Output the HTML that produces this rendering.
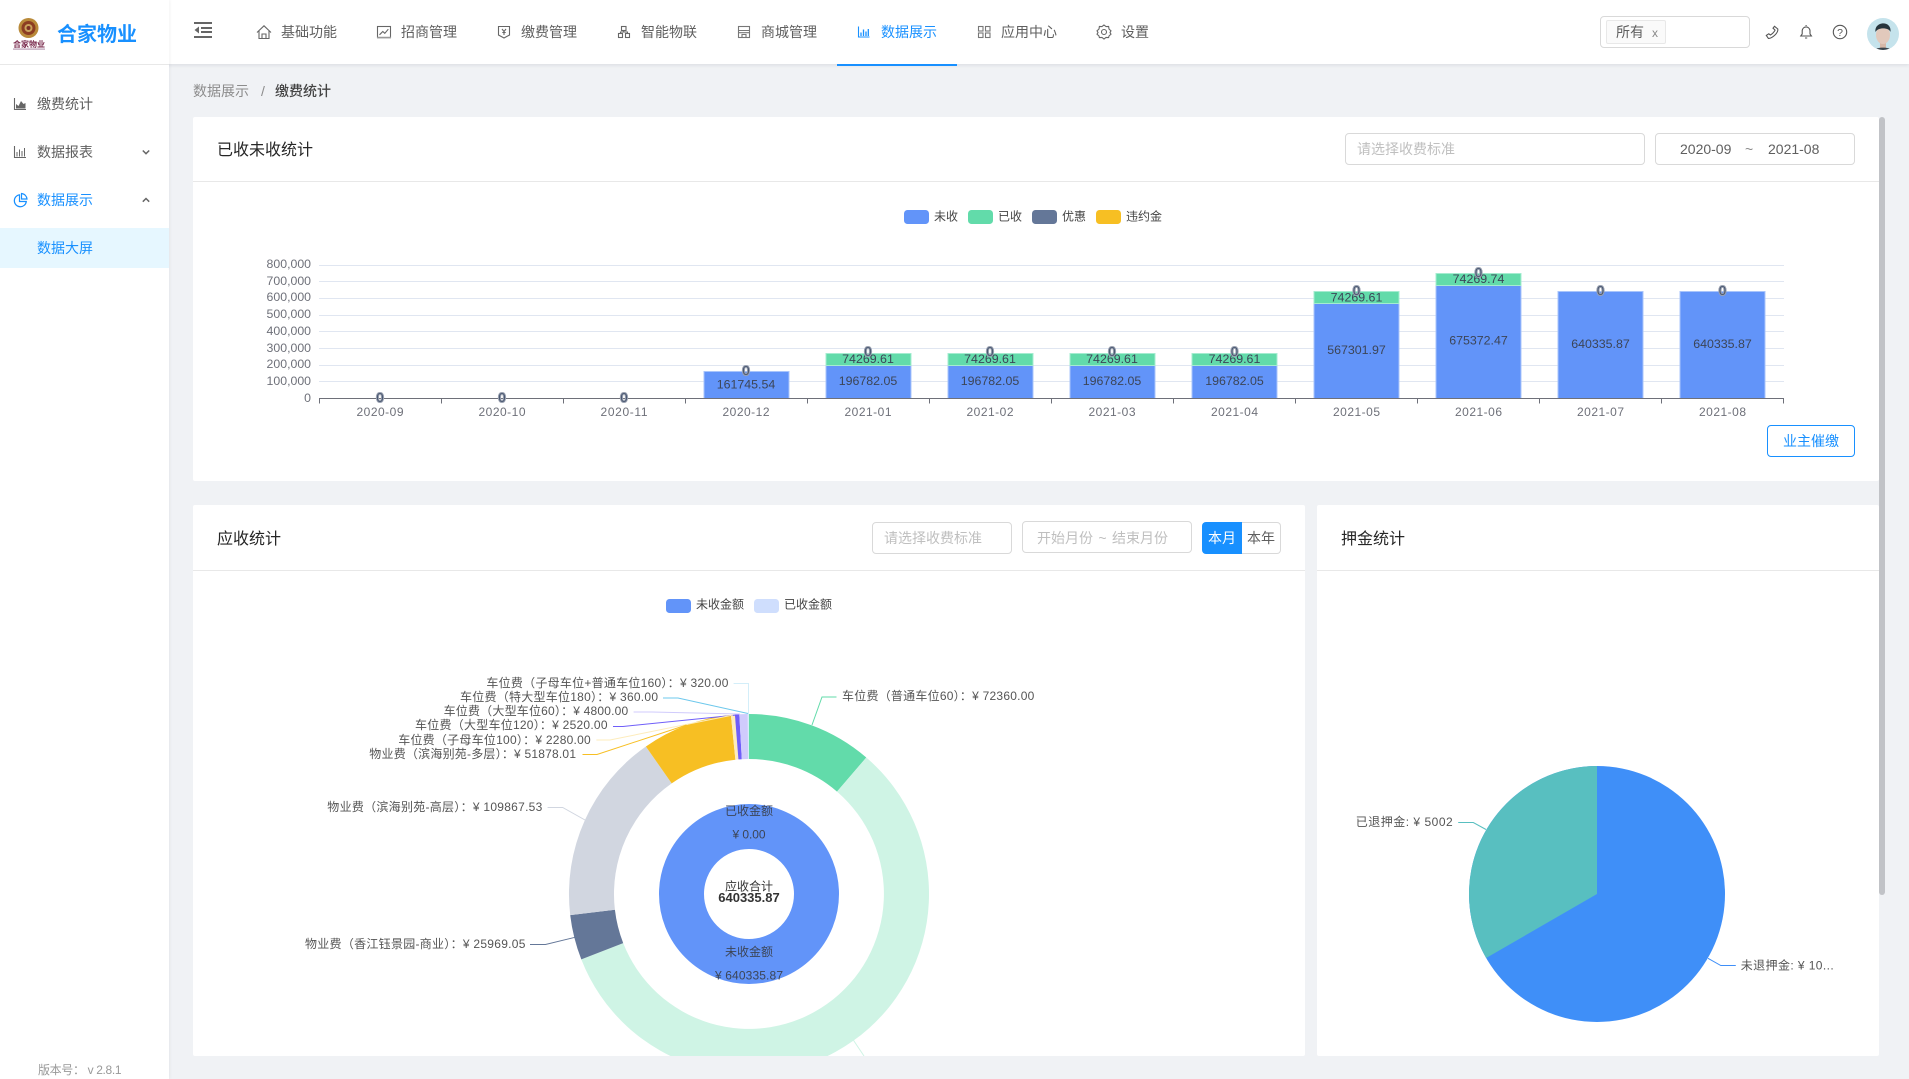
<!DOCTYPE html>
<html lang="zh-CN">
<head>
<meta charset="utf-8">
<title>数据展示 - 缴费统计</title>
<style>
*{box-sizing:border-box;margin:0;padding:0}
html,body{width:1909px;height:1079px;overflow:hidden;background:#f0f2f5}
body{position:relative;font-family:"Liberation Sans","Noto Sans CJK SC",sans-serif;font-size:14px;color:#5f5f5f}
.abs{position:absolute}
.t{position:absolute;white-space:nowrap;line-height:20px;height:20px}
.header{position:absolute;left:0;top:0;width:1909px;height:64px;background:#fff;box-shadow:0 1px 4px rgba(0,21,41,.1)}
.side{position:absolute;left:0;top:0;width:169px;height:1079px;background:#fff;box-shadow:1px 0 3px rgba(0,21,41,.05)}
.side-line{position:absolute;left:0;top:64px;width:169px;height:1px;background:#e8e8e8}
.panel{position:absolute;background:#fff;border-radius:2px}
.hline{position:absolute;height:1px;background:#e8e8e8}
.title{font-size:16px;color:#262626;line-height:24px;height:24px}
.box{position:absolute;border:1px solid #d9d9d9;border-radius:4px;background:#fff}
.ph{color:#bfbfbf}
svg{position:absolute;left:0;top:0}
svg text{font-family:"Liberation Sans","Noto Sans CJK SC",sans-serif}
.c{font-family:"Noto Sans CJK TC",sans-serif}
</style>
</head>
<body>

<div class="header"></div>
<div class="side"></div>
<div class="side-line"></div>

<!-- brand -->
<div class="t" style="left:57px;top:21px;height:28px;line-height:28px;font-size:20px;font-weight:bold;color:#1890ff">合家物业</div>

<!-- top nav -->
<div class="t" style="left:281px;top:22px">基础功能</div>
<div class="t" style="left:401px;top:22px">招商管理</div>
<div class="t" style="left:521px;top:22px">缴费管理</div>
<div class="t" style="left:641px;top:22px">智能物联</div>
<div class="t" style="left:761px;top:22px">商城管理</div>
<div class="t" style="left:881px;top:22px;color:#1890ff">数据展示</div>
<div class="t" style="left:1001px;top:22px">应用中心</div>
<div class="t" style="left:1121px;top:22px">设置</div>
<div class="abs" style="left:837px;top:64px;width:120px;height:2px;background:#1890ff"></div>

<!-- top right tag select -->
<div class="box" style="left:1600px;top:16px;width:150px;height:32px"></div>
<div class="abs" style="left:1606px;top:20px;width:60px;height:24px;background:#fafafa;border:1px solid #e8e8e8;border-radius:2px"></div>
<div class="t" style="left:1616px;top:22px">所有</div>
<div class="t" style="left:1652px;top:23px;color:#888;font-size:12px">x</div>

<!-- sidebar -->
<div class="t" style="left:37px;top:94px">缴费统计</div>
<div class="t" style="left:37px;top:142px">数据报表</div>
<div class="t" style="left:37px;top:190px;color:#1890ff">数据展示</div>
<div class="abs" style="left:0;top:228px;width:169px;height:40px;background:#e6f7ff"></div>
<div class="t" style="left:37px;top:238px;color:#1890ff">数据大屏</div>
<div class="t" style="left:38px;top:1060px;font-size:12px;color:#999;letter-spacing:-.35px">版本号： v 2.8.1</div>

<!-- breadcrumb -->
<div class="t" style="left:193px;top:81px;color:#8c8c8c">数据展示</div>
<div class="t" style="left:261px;top:81px;color:#8c8c8c">/</div>
<div class="t" style="left:275px;top:81px;color:#444;font-weight:500">缴费统计</div>

<!-- panel 1 -->
<div class="panel" style="left:193px;top:117px;width:1686px;height:364px"></div>
<div class="hline" style="left:193px;top:181px;width:1686px"></div>
<div class="t title" style="left:217px;top:139px">已收未收统计</div>
<div class="box" style="left:1345px;top:133px;width:300px;height:32px"></div>
<div class="t ph" style="left:1357px;top:139px">请选择收费标准</div>
<div class="box" style="left:1655px;top:133px;width:200px;height:32px"></div>
<div class="t" style="left:1680px;top:139px">2020-09</div>
<div class="t" style="left:1745px;top:139px;color:#8c8c8c">~</div>
<div class="t" style="left:1768px;top:139px">2021-08</div>
<div class="box" style="left:1767px;top:425px;width:88px;height:32px;border-color:#1890ff"></div>
<div class="t" style="left:1783px;top:431px;color:#1890ff">业主催缴</div>

<!-- panel 2 -->
<div class="panel" style="left:193px;top:505px;width:1112px;height:551px"></div>
<div class="hline" style="left:193px;top:570px;width:1112px"></div>
<div class="t title" style="left:217px;top:528px">应收统计</div>
<div class="box" style="left:872px;top:522px;width:140px;height:32px"></div>
<div class="t ph" style="left:884px;top:528px">请选择收费标准</div>
<div class="box" style="left:1022px;top:521px;width:170px;height:32px"></div>
<div class="t ph" style="left:1037px;top:528px;word-spacing:1.5px">开始月份 ~ 结束月份</div>
<div class="abs" style="left:1202px;top:522px;width:40px;height:32px;background:#1890ff;border-radius:4px 0 0 4px"></div>
<div class="abs" style="left:1242px;top:522px;width:39px;height:32px;border:1px solid #d9d9d9;border-left:0;border-radius:0 4px 4px 0"></div>
<div class="t" style="left:1208px;top:528px;color:#fff">本月</div>
<div class="t" style="left:1247px;top:528px">本年</div>

<!-- panel 3 -->
<div class="panel" style="left:1317px;top:505px;width:562px;height:551px"></div>
<div class="hline" style="left:1317px;top:570px;width:562px"></div>
<div class="t title" style="left:1341px;top:528px">押金统计</div>

<!-- scrollbar -->
<div class="abs" style="left:1879px;top:117px;width:6px;height:778px;background:#c1c3c7;border-radius:3px"></div>

<svg width="1909" height="1079" viewBox="0 0 1909 1079" xmlns="http://www.w3.org/2000/svg">
<defs>
<clipPath id="p2"><rect x="193" y="571" width="1112" height="485"/></clipPath>
<clipPath id="av"><circle cx="1883" cy="34" r="16"/></clipPath>
</defs>

<!-- logo -->
<g>
<circle cx="28.5" cy="28" r="10" fill="#b98a3a"/>
<circle cx="28.5" cy="28" r="7" fill="#8c3d22"/>
<circle cx="28.5" cy="28" r="4" fill="#c9a25b"/>
<circle cx="28.5" cy="28" r="2" fill="#7c2f24"/>
<text x="29" y="47" text-anchor="middle" font-size="8" font-weight="bold" fill="#7a2a4d" textLength="32" lengthAdjust="spacingAndGlyphs">合家物业</text>
<rect x="13" y="48.5" width="32" height="1.2" fill="#b79ab0"/>
</g>

<!-- fold icon -->
<g fill="#666">
<rect x="194" y="22" width="18" height="2"/><rect x="201" y="27" width="11" height="2"/><rect x="201" y="31" width="11" height="2"/><rect x="194" y="36" width="18" height="2"/>
<path d="M199 26.5V33.5L194.5 30Z"/>
</g>

<!-- nav icons -->
<g fill="none" stroke="#666" stroke-width="1.1">
<path d="M257 32.5L264 25.8L271 32.5M259 31V38.5H269V31M262 38.5V34H266V38.5"/>
<rect x="377.5" y="26.5" width="13" height="11"/><path d="M377 37.6H391" stroke-width="1.6" stroke="#999"/><path d="M379.5 34.8L382.8 31.5L384.8 33.3L388.3 29.2"/>
<path d="M498.5 26.5H509.5V35L504 38L498.5 35Z"/><path d="M502 29L504 31.5L506 29M504 31.5V35M502.3 32.5H505.7"/>
<rect x="621.5" y="26.5" width="4.5" height="4"/><rect x="618.5" y="33.5" width="4" height="4"/><rect x="625.5" y="33.5" width="4" height="4"/><path d="M623.7 30.5V32H620.5V33.5M623.7 32H627.5V33.5"/>
<rect x="738.5" y="26.5" width="11" height="11" stroke="#777"/><path d="M738.5 30.5H749.5M738.5 32.7H749.5M742 37.5V34.5H746V37.5" stroke="#777"/>
<path d="M858.5 26.5V37H869.5" stroke="#1890ff"/><path d="M861 36V32.5M863.5 36V29.5M866 36V31.5M868.3 36V29" stroke="#1890ff" stroke-width="1.3"/>
<g stroke="#777"><rect x="978.5" y="26.5" width="4.5" height="4.5"/><rect x="985.5" y="26.5" width="4.5" height="4.5"/><rect x="978.5" y="33" width="4.5" height="4.5"/><rect x="985.5" y="33" width="4.5" height="4.5"/></g>
<path d="M1104 25L1106 26.6L1108.6 26.4L1109 29L1111 30.8L1110 32.5L1111 34.2L1109 36L1108.6 37.6L1106 37.4L1104 39L1102 37.4L1099.4 37.6L1099 36L1097 34.2L1098 32.5L1097 30.8L1099 29L1099.4 26.4L1102 26.6Z"/><circle cx="1104" cy="32" r="2.5"/>
<!-- phone -->
<path d="M1774.5 26.3L1777.8 29C1778.5 33 1772 38.5 1768.4 38.4L1766.3 35.4L1768.8 33.8L1770.4 35C1772 34.3 1774.4 31.8 1775.1 30.1L1773 28.2Z" stroke="#555"/>
<!-- bell -->
<path d="M1800.8 36H1811.4L1810 34V30.5A4 4.6 0 0 0 1802.2 30.5V34ZM1805 38H1807.2M1806.1 26V25" stroke="#555"/>
<!-- help -->
<circle cx="1840" cy="32" r="6.7" stroke="#555"/>
</g>
<text x="1840" y="36" text-anchor="middle" font-size="10.5" fill="#555">?</text>

<!-- avatar -->
<g clip-path="url(#av)">
<rect x="1867" y="18" width="32" height="32" fill="#c5e3ec"/>
<rect x="1880" y="42" width="6" height="6" fill="#d6b8a8"/>
<ellipse cx="1883" cy="35" rx="7" ry="9" fill="#e2c9bc"/>
<path d="M1875.5 32C1874 21 1892 20 1890.5 32C1889 27.5 1878 27 1875.5 32Z" fill="#26343c"/>
<path d="M1873 51C1875 46.5 1891 46.5 1893 51Z" fill="#3a444c"/>
</g>

<!-- sidebar icons -->
<g>
<path d="M14.5 98V109.5H26" fill="none" stroke="#666" stroke-width="1.1"/>
<path d="M16 108.5V104L18.5 106L21 101L23.5 104L25.5 103V108.5Z" fill="#666"/>
<path d="M14.5 146V157.5H26" fill="none" stroke="#666" stroke-width="1.1"/>
<path d="M17 156.5V152M19.5 156.5V149.5M22 156.5V151M24.5 156.5V148" stroke="#666" fill="none"/>
<path d="M19.5 195.3A6 6 0 1 0 26.3 202H19.5Z" fill="none" stroke="#1890ff" stroke-width="1.2" transform="translate(0,-0.5)"/>
<path d="M21.5 193.5A6 6 0 0 1 27 199H21.5Z" fill="none" stroke="#1890ff" stroke-width="1.2"/>
<path d="M142.8 150.5L146 153.7L149.2 150.5" fill="none" stroke="#666" stroke-width="1.5"/>
<path d="M142.8 201.7L146 198.5L149.2 201.7" fill="none" stroke="#666" stroke-width="1.5"/>
</g>

<!-- legend 1 -->
<g font-size="12" fill="#444">
<rect x="904" y="210" width="25" height="14" rx="3.5" fill="#6294f9"/><text x="934" y="220.5">未收</text>
<rect x="968" y="210" width="25" height="14" rx="3.5" fill="#62dbaa"/><text x="998" y="220.5">已收</text>
<rect x="1032" y="210" width="25" height="14" rx="3.5" fill="#647798"/><text x="1062" y="220.5">优惠</text>
<rect x="1096" y="210" width="25" height="14" rx="3.5" fill="#f7bf23"/><text x="1126" y="220.5">违约金</text>
</g>

<!-- bar chart grid -->
<g stroke="#e0e6f1" stroke-width="1">
<path d="M319 265.5H1784M319 281.5H1784M319 298.5H1784M319 315.5H1784M319 331.5H1784M319 348.5H1784M319 365.5H1784M319 381.5H1784"/>
</g>
<g font-size="12.3" fill="#6e7079" text-anchor="end">
<text x="311" y="268">800,000</text><text x="311" y="285">700,000</text><text x="311" y="301">600,000</text><text x="311" y="318">500,000</text><text x="311" y="335">400,000</text><text x="311" y="352">300,000</text><text x="311" y="368">200,000</text><text x="311" y="385">100,000</text><text x="311" y="402">0</text>
</g>

<!-- bars -->
<g stroke="#a9c5fb" stroke-width="1" fill="#6294f9">
<rect x="704" y="371.5" width="85" height="27"/>
<rect x="826" y="365.5" width="85" height="33"/>
<rect x="948" y="365.5" width="85" height="33"/>
<rect x="1070" y="365.5" width="85" height="33"/>
<rect x="1192" y="365.5" width="85" height="33"/>
<rect x="1314" y="303.5" width="85" height="95"/>
<rect x="1436" y="285.5" width="85" height="113"/>
<rect x="1558" y="291.5" width="85" height="107"/>
<rect x="1680" y="291.5" width="85" height="107"/>
</g>
<g stroke="#a5ecd0" stroke-width="1" fill="#62dbaa">
<rect x="826" y="353.5" width="85" height="12"/>
<rect x="948" y="353.5" width="85" height="12"/>
<rect x="1070" y="353.5" width="85" height="12"/>
<rect x="1192" y="353.5" width="85" height="12"/>
<rect x="1314" y="291.5" width="85" height="12"/>
<rect x="1436" y="273.5" width="85" height="12"/>
</g>

<!-- axis -->
<path d="M319 398.5H1784M319.5 398.5V403.5M441.5 398.5V403.5M563.5 398.5V403.5M685.5 398.5V403.5M807.5 398.5V403.5M929.5 398.5V403.5M1051.5 398.5V403.5M1173.5 398.5V403.5M1295.5 398.5V403.5M1417.5 398.5V403.5M1539.5 398.5V403.5M1661.5 398.5V403.5M1783.5 398.5V403.5" stroke="#6e7079" fill="none"/>
<g font-size="12" fill="#6e7079" text-anchor="middle">
<text x="380" y="416" textLength="47">2020-09</text><text x="502" y="416" textLength="47">2020-10</text><text x="624" y="416" textLength="47">2020-11</text><text x="746" y="416" textLength="47">2020-12</text><text x="868" y="416" textLength="47">2021-01</text><text x="990" y="416" textLength="47">2021-02</text><text x="1112" y="416" textLength="47">2021-03</text><text x="1234.5" y="416" textLength="47">2021-04</text><text x="1356.5" y="416" textLength="47">2021-05</text><text x="1478.5" y="416" textLength="47">2021-06</text><text x="1600.5" y="416" textLength="47">2021-07</text><text x="1722.5" y="416" textLength="47">2021-08</text>
</g>

<!-- bar labels -->
<g font-size="12.4" fill="#3c4557" text-anchor="middle">
<text x="746" y="388.5">161745.54</text>
<text x="868" y="385">196782.05</text><text x="990" y="385">196782.05</text><text x="1112" y="385">196782.05</text><text x="1234.5" y="385">196782.05</text>
<text x="868" y="363">74269.61</text><text x="990" y="363">74269.61</text><text x="1112" y="363">74269.61</text><text x="1234.5" y="363">74269.61</text>
<text x="1356.5" y="354">567301.97</text><text x="1356.5" y="301.5">74269.61</text>
<text x="1478.5" y="344.5">675372.47</text><text x="1478.5" y="283">74269.74</text>
<text x="1600.5" y="348">640335.87</text><text x="1722.5" y="348">640335.87</text>
</g>
<g font-size="13" fill="#4a5872" stroke="#9aa1b0" stroke-width="2" paint-order="stroke" text-anchor="middle">
<text x="380" y="402">0</text><text x="502" y="402">0</text><text x="624" y="402">0</text><text x="746" y="375">0</text><text x="868" y="356">0</text><text x="990" y="356">0</text><text x="1112" y="356">0</text><text x="1234.5" y="356">0</text><text x="1356.5" y="295">0</text><text x="1478.5" y="277">0</text><text x="1600.5" y="295">0</text><text x="1722.5" y="295">0</text>
</g>

<!-- legend 2 -->
<g font-size="12" fill="#444">
<rect x="666" y="599" width="25" height="14" rx="3.5" fill="#6294f9"/><text x="696" y="608.5">未收金额</text>
<rect x="754" y="599" width="25" height="14" rx="3.5" fill="#cfdefd"/><text x="784" y="608.5">已收金额</text>
</g>

<!-- donut -->
<g clip-path="url(#p2)">
<path d="M749 714A180 180 0 0 1 866.3 757.5L837 791.6A135 135 0 0 0 749 759Z" fill="#62dbaa"/>
<path d="M866.3 757.5A180 180 0 1 1 581.3 959.4L623.2 943.1A135 135 0 1 0 837 791.6Z" fill="#cff4e5"/>
<path d="M581.3 959.4A180 180 0 0 1 570.2 915.1L614.9 909.8A135 135 0 0 0 623.2 943.1Z" fill="#647798"/>
<path d="M570.2 915.1A180 180 0 0 1 645.9 746.5L671.7 783.4A135 135 0 0 0 614.9 909.8Z" fill="#d1d6e0"/>
<path d="M645.9 746.5A180 180 0 0 1 730.9 714.9L735.4 759.7A135 135 0 0 0 671.7 783.4Z" fill="#f7bf23"/>
<path d="M730.9 714.9A180 180 0 0 1 734.9 714.6L738.4 759.4A135 135 0 0 0 735.4 759.7Z" fill="#fdecbc"/>
<path d="M734.9 714.6A180 180 0 0 1 739.3 714.3L741.8 759.2A135 135 0 0 0 738.4 759.4Z" fill="#6f5ef9"/>
<path d="M739.3 714.3A180 180 0 0 1 747.8 714L748.1 759A135 135 0 0 0 741.8 759.2Z" fill="#d0cbfc"/>
<path d="M747.8 714L749 714L749 759L748.1 759Z" fill="#d3eef9"/>
<circle cx="749" cy="894" r="67.5" fill="none" stroke="#6294f9" stroke-width="45"/>

<!-- lead lines -->
<g fill="none" stroke-width="1">
<path d="M733.6 683.5H748.5V714" stroke="#d3eef9"/>
<path d="M663 698H678L748 713.5" stroke="#6dc8ec"/>
<path d="M633.6 712H651.5L740 714" stroke="#d0cbfc"/>
<path d="M613 726.5H623L736.5 715" stroke="#6f5ef9"/>
<path d="M596.4 740H610L733 715" stroke="#fdecbc"/>
<path d="M582.5 754.5H597L686.5 725" stroke="#f7bf23"/>
<path d="M812 725L822 697H836.5" stroke="#62dbaa"/>
<path d="M547.6 807.5H562.7L585 820" stroke="#d1d6e0"/>
<path d="M530 944.5H545.5L575 937.3" stroke="#647798"/>
<path d="M853.3 1040L864 1056" stroke="#cff4e5"/>
</g>
</g>

<!-- donut labels -->
<g font-size="12" fill="#555">
<text x="486.4" y="687" textLength="242" lengthAdjust="spacing">车位费（子母车位+普通车位160）<tspan class="c">：</tspan>¥ 320.00</text>
<text x="460" y="701" textLength="198" lengthAdjust="spacing">车位费（特大型车位180）<tspan class="c">：</tspan>¥ 360.00</text>
<text x="443.6" y="715" textLength="184.6" lengthAdjust="spacing">车位费（大型车位60）<tspan class="c">：</tspan>¥ 4800.00</text>
<text x="415" y="729" textLength="192.5" lengthAdjust="spacing">车位费（大型车位120）<tspan class="c">：</tspan>¥ 2520.00</text>
<text x="398.2" y="744" textLength="192.5" lengthAdjust="spacing">车位费（子母车位100）<tspan class="c">：</tspan>¥ 2280.00</text>
<text x="369.3" y="758" textLength="206.7" lengthAdjust="spacing">物业费（滨海别苑-多层）<tspan class="c">：</tspan>¥ 51878.01</text>
<text x="327.3" y="811" textLength="215" lengthAdjust="spacing">物业费（滨海别苑-高层）<tspan class="c">：</tspan>¥ 109867.53</text>
<text x="305" y="948" textLength="220.4" lengthAdjust="spacing">物业费（香江钰景园-商业）<tspan class="c">：</tspan>¥ 25969.05</text>
<text x="842" y="700" textLength="192.3" lengthAdjust="spacing">车位费（普通车位60）<tspan class="c">：</tspan>¥ 72360.00</text>
</g>
<g font-size="12" fill="#3c4557" text-anchor="middle">
<text x="749" y="815">已收金额</text>
<text x="749" y="838.5" textLength="33">¥ 0.00</text>
<text x="749" y="890.5" fill="#333">应收合计</text>
<text x="749" y="901.8" font-size="13" font-weight="bold" fill="#333">640335.87</text>
<text x="749" y="956">未收金额</text>
<text x="749" y="979.5" textLength="68">¥ 640335.87</text>
</g>

<!-- pie -->
<circle cx="1597" cy="894" r="128" fill="#3f8ff8"/>
<path d="M1597 894L1486.15 958A128 128 0 0 1 1597 766Z" fill="#58bfc0"/>
<path d="M1458.2 822.5H1473.3L1486 829.5" fill="none" stroke="#58bfc0"/>
<path d="M1708 958.3L1720.8 965.5H1735.8" fill="none" stroke="#3f8ff8"/>
<g font-size="12" fill="#555">
<text x="1355.7" y="826" textLength="97" lengthAdjust="spacing">已退押金: ¥ 5002</text>
<text x="1740.7" y="969.5" textLength="93" lengthAdjust="spacing">未退押金: ¥ 10...</text>
</g>
</svg>

</body>
</html>
